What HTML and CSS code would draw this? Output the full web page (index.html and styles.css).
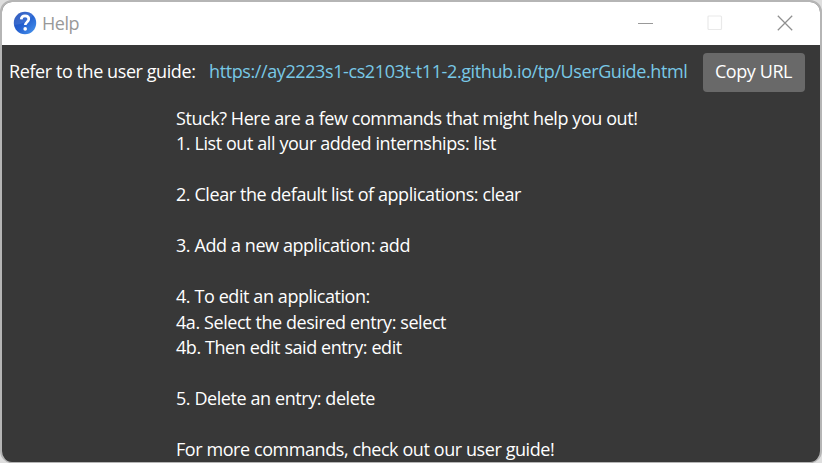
FILE: index.html
```html
<!DOCTYPE html>
<html lang="en">
<head>
<meta charset="utf-8">
<title>Help</title>
<link rel="stylesheet" href="styles.css">
</head>
<body>
<div class="window">
  <header class="titlebar">
    <svg class="app-icon" width="24" height="24" viewBox="0 0 24 24">
      <defs>
        <linearGradient id="ball" x1="0" y1="0" x2="1" y2="1">
          <stop offset="0" stop-color="#1d49b4"/>
          <stop offset=".5" stop-color="#2460d0"/>
          <stop offset="1" stop-color="#4b9af0"/>
        </linearGradient>
      </defs>
      <circle cx="12" cy="12" r="11.2" fill="url(#ball)"/>
      <path d="M1 14C7 14 17 10 20 4A11.2 11.2 0 0 0 1 14Z" fill="#fff" opacity=".1"/>
      <path d="M8.2 8.4C8.4 5.9 10 4.9 12 4.9c2.2 0 3.8 1.2 3.8 3.2 0 2.9-3.5 2.8-3.5 6" fill="none" stroke="#fff" stroke-width="2.7"/>
      <circle cx="12.2" cy="17.9" r="1.8" fill="#fff"/>
    </svg>
    <h1 class="title">Help</h1>
    <div class="controls">
      <svg width="16" height="16" viewBox="0 0 16 16"><path d="M1 8.5H16" stroke="#999"/></svg>
      <svg width="16" height="16" viewBox="0 0 16 16"><rect x="1" y="1" width="13.5" height="13.5" rx="1" fill="none" stroke="#e9e9e9" stroke-width="1.2"/></svg>
      <svg width="16" height="16" viewBox="0 0 16 16"><path d="M.8 .8L15.2 15.2M15.2 .8L.8 15.2" stroke="#8f8f8f" stroke-width="1.25"/></svg>
    </div>
  </header>
  <main class="content">
    <div class="guide">
      <span class="label">Refer to the user guide:</span>
      <span class="url">https://ay2223s1-cs2103t-t11-2.github.io/tp/UserGuide.html</span>
      <button class="copy">Copy URL</button>
    </div>
    <div class="commands">
      <p>Stuck? Here are a few commands that might help you out!<br>1. List out all your added internships: list</p>
      <p>2. Clear the default list of applications: clear</p>
      <p>3. Add a new application: add</p>
      <p>4. To edit an application:<br>4a. Select the desired entry: select<br>4b. Then edit said entry: edit</p>
      <p>5. Delete an entry: delete</p>
      <p>For more commands, check out our user guide!</p>
    </div>
  </main>
</div>
</body>
</html>
```
FILE: styles.css
```css
* { box-sizing: border-box; }
body {
  margin: 0;
  height: 463px;
  overflow: hidden;
  background: #dedede;
  font-family: "Open Sans", "Noto Sans", sans-serif;
  font-size: 18px;
}
.window {
  height: 463px;
  border: 2px solid #b5b5b5;
  border-bottom-width: 1px;
  border-radius: 12px;
  overflow: hidden;
  background: #383838;
}
.titlebar {
  display: flex;
  align-items: center;
  height: 43px;
  padding: 0 27px 2px 11px;
  background: #fff;
}
.title {
  margin: 1px 0 0 5px;
  font-size: 18px;
  font-weight: 400;
  letter-spacing: -0.5px;
  color: #999;
}
.controls {
  display: flex;
  gap: 54px;
  margin-left: auto;
}
.controls svg, .app-icon { display: block; }
.content { color: #fff; }
.guide {
  display: flex;
  align-items: center;
  height: 54px;
  padding-left: 7px;
  white-space: nowrap;
}
.label {
  width: 200px;
  margin-top: -2px;
  letter-spacing: -0.42px;
}
.url {
  width: 494px;
  margin-top: -2px;
  letter-spacing: -0.4px;
  color: #78c8e6;
}
.copy {
  width: 102px;
  height: 39px;
  padding: 0 1px 2px 0;
  border: 0;
  border-radius: 4px;
  background: #696969;
  color: #fff;
  font: inherit;
  letter-spacing: -0.42px;
}
.commands {
  margin: 6.5px 0 0 174px;
  line-height: 25.5px;
  letter-spacing: -0.44px;
  word-spacing: 0.1px;
  white-space: nowrap;
}
.commands p { margin: 0 0 25.5px; }
```
